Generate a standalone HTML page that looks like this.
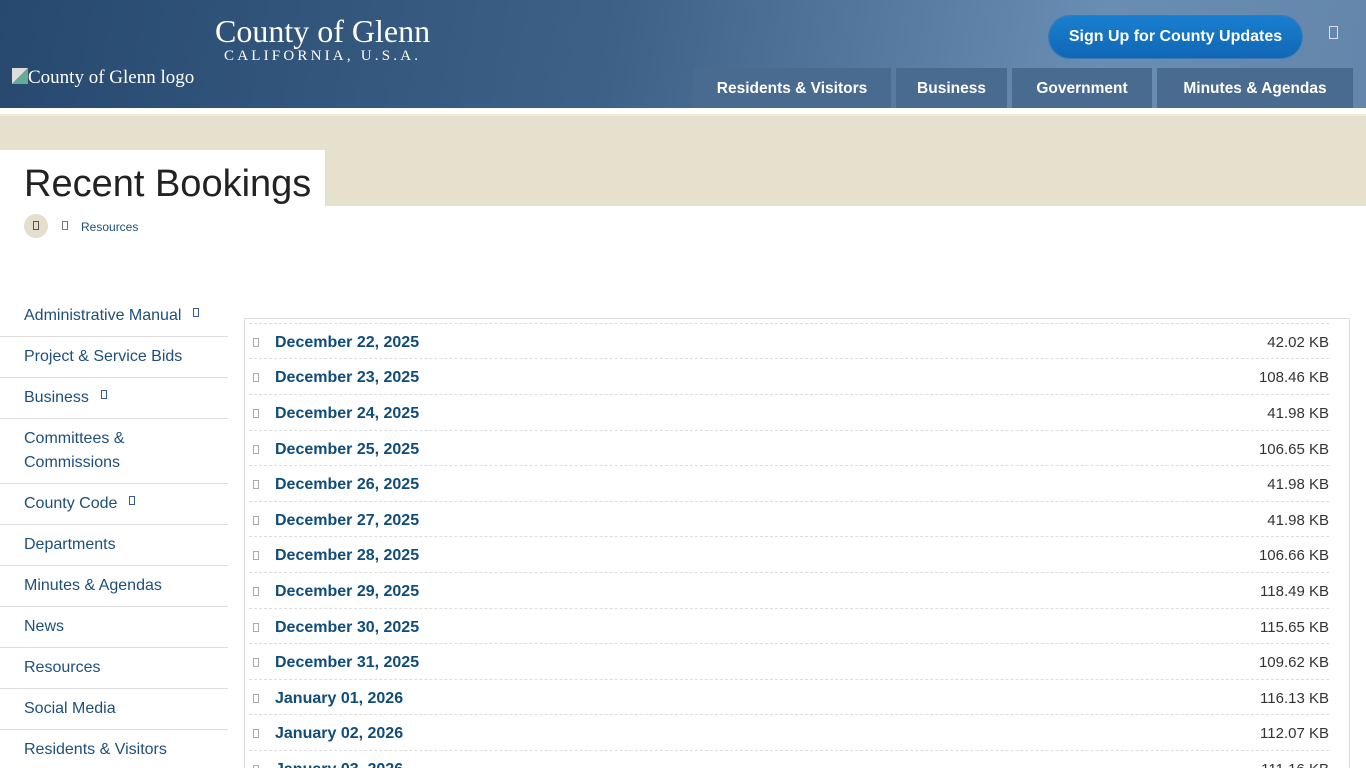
<!DOCTYPE html>
<html><head><meta charset="utf-8"><style>
*{margin:0;padding:0;box-sizing:border-box}
html,body{width:1366px;height:768px;overflow:hidden}
body{background:#fff;font-family:"Liberation Sans",sans-serif;position:relative}
.hdr{position:absolute;left:0;top:0;width:1366px;height:108px;background:linear-gradient(100deg,#27496f 0%,#3d6187 45%,#6a8db3 80%,#6486ab 100%)}
.t1{position:absolute;left:215px;top:13px;color:#fff;font-family:"Liberation Serif",serif;font-size:32px}
.t2{position:absolute;left:224px;top:48px;color:#fff;font-family:"Liberation Serif",serif;font-size:15px;letter-spacing:3.2px}
.logo{position:absolute;left:12px;top:67px;color:#fff;font-family:"Liberation Serif",serif;font-size:19px}
.logo i{display:inline-block;width:16px;height:16px;background:linear-gradient(135deg,#ddd 50%,#6a9 50%);vertical-align:-1px}
.btn{position:absolute;left:1049px;top:16px;width:253px;height:42px;border-radius:21px;background:linear-gradient(#1a7fd0,#0f67b3);color:#fff;font-size:16px;font-weight:bold;text-align:center;line-height:42px;box-shadow:0 0 0 1px #3a7bb5}
.sq{position:absolute;left:1329px;top:26px;width:9px;height:13px;border:1px solid #dde}
.nav{position:absolute;top:68px;height:40px;background:#4a6b90;color:#fff;font-weight:bold;font-size:15.5px;text-align:center;line-height:41px}
.beige{position:absolute;left:0;top:114px;width:1366px;height:92px;background:#e6e1cd;border-top:2px solid #efebdc}
.tbox{position:absolute;left:0;top:150px;width:325px;height:60px;background:#fff}
h1{position:absolute;left:24px;top:163px;font-weight:normal;font-size:38px;color:#222;font-family:"Liberation Sans",sans-serif}
.home{position:absolute;left:24px;top:214px;width:24px;height:24px;border-radius:12px;background:#e3dfcc}
.ic{display:inline-block;width:6px;height:9px;border:1px solid #888}
.side{position:absolute;left:0;top:296px;width:228px}
.side div{border-bottom:1px solid #ddd;padding:8px 0 8px 24px;font-size:16px;color:#1d4f7a;line-height:24px}
.side .ic{border-color:#3a5a9a;margin-left:12px;vertical-align:3px}
.box{position:absolute;left:244px;top:318px;width:1106px;height:460px;border:1px solid #ddd}
.row{position:absolute;left:249px;width:1080px;height:36px;border-top:1px dashed #ddd;font-size:15px}
.row .ic{position:absolute;left:4px;top:14px;border-color:#aaa}
.row b{position:absolute;left:26px;top:10px;color:#0f4c7a;font-size:16px}
.row span{position:absolute;right:0;top:10px;color:#333}
</style></head><body>
<div class="hdr"></div>
<div class="t1">County of Glenn</div>
<div class="t2">CALIFORNIA, U.S.A.</div>
<div class="logo"><i></i>County of Glenn logo</div>
<div class="btn">Sign Up for County Updates</div>
<div class="sq"></div>
<div class="nav" style="left:693px;width:198px">Residents &amp; Visitors</div>
<div class="nav" style="left:896px;width:111px">Business</div>
<div class="nav" style="left:1012px;width:140px">Government</div>
<div class="nav" style="left:1157px;width:196px">Minutes &amp; Agendas</div>
<div class="beige"></div>
<div class="tbox"></div>
<h1>Recent Bookings</h1>
<div class="home"><span class="ic" style="position:absolute;left:9px;top:7px;border-color:#555"></span></div>
<span class="ic" style="position:absolute;left:62px;top:221px;border-color:#777"></span>
<div style="position:absolute;left:81px;top:220px;font-size:12px;color:#1d4f7a">Resources</div>
<div class="side">
<div>Administrative Manual<span class="ic"></span></div>
<div>Project &amp; Service Bids</div>
<div>Business<span class="ic"></span></div>
<div>Committees &amp;<br>Commissions</div>
<div>County Code<span class="ic"></span></div>
<div>Departments</div>
<div>Minutes &amp; Agendas</div>
<div>News</div>
<div>Resources</div>
<div>Social Media</div>
<div>Residents &amp; Visitors</div>
</div>
<div class="box"></div>
<div class="row" style="top:323px"><i class="ic"></i><b>December 22, 2025</b><span>42.02 KB</span></div>
<div class="row" style="top:358px"><i class="ic"></i><b>December 23, 2025</b><span>108.46 KB</span></div>
<div class="row" style="top:394px"><i class="ic"></i><b>December 24, 2025</b><span>41.98 KB</span></div>
<div class="row" style="top:430px"><i class="ic"></i><b>December 25, 2025</b><span>106.65 KB</span></div>
<div class="row" style="top:465px"><i class="ic"></i><b>December 26, 2025</b><span>41.98 KB</span></div>
<div class="row" style="top:501px"><i class="ic"></i><b>December 27, 2025</b><span>41.98 KB</span></div>
<div class="row" style="top:536px"><i class="ic"></i><b>December 28, 2025</b><span>106.66 KB</span></div>
<div class="row" style="top:572px"><i class="ic"></i><b>December 29, 2025</b><span>118.49 KB</span></div>
<div class="row" style="top:608px"><i class="ic"></i><b>December 30, 2025</b><span>115.65 KB</span></div>
<div class="row" style="top:643px"><i class="ic"></i><b>December 31, 2025</b><span>109.62 KB</span></div>
<div class="row" style="top:679px"><i class="ic"></i><b>January 01, 2026</b><span>116.13 KB</span></div>
<div class="row" style="top:714px"><i class="ic"></i><b>January 02, 2026</b><span>112.07 KB</span></div>
<div class="row" style="top:750px"><i class="ic"></i><b>January 03, 2026</b><span>111.16 KB</span></div>
</body></html>
